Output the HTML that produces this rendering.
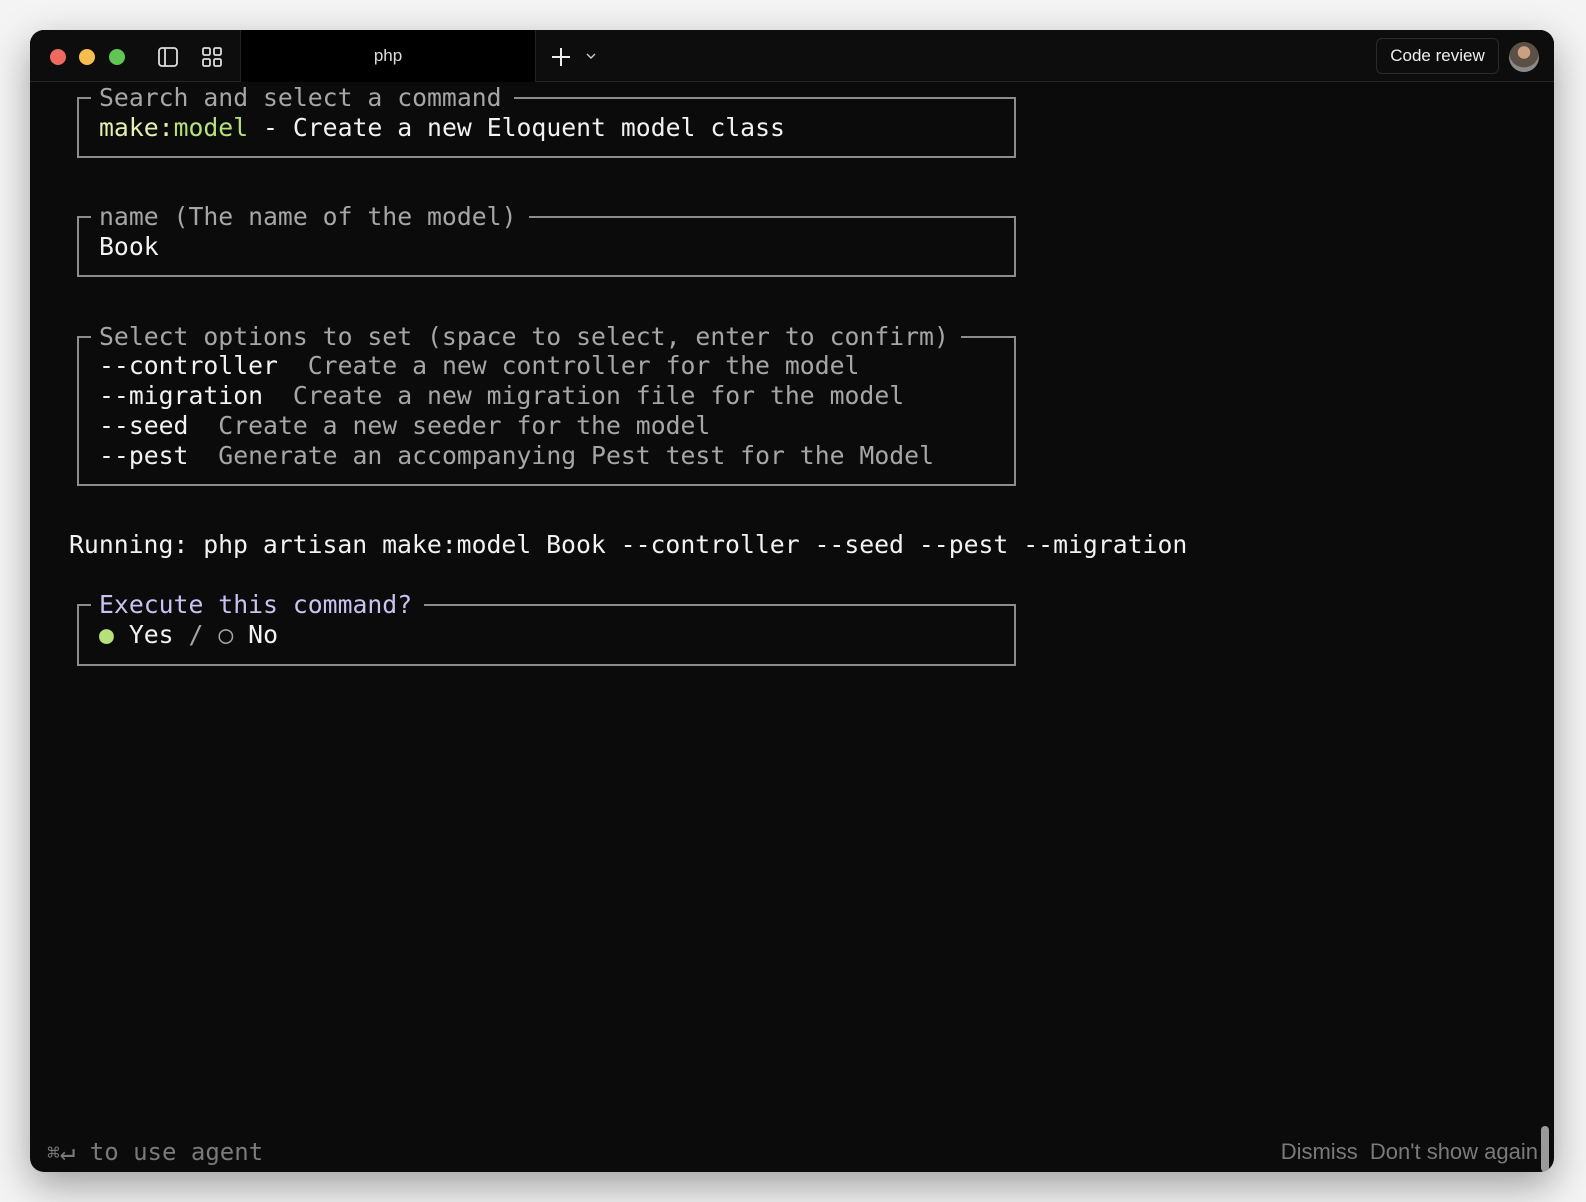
<!DOCTYPE html>
<html><head><meta charset="utf-8"><style>
*{margin:0;padding:0;box-sizing:border-box}
body{width:1586px;height:1202px;background:#f4f4f4;position:relative;overflow:hidden;font-family:"DejaVu Sans Mono","Liberation Mono",monospace}
.win{position:absolute;left:30px;top:30px;width:1524px;height:1142px;background:#0b0b0b;border-radius:14px;box-shadow:0 14px 40px rgba(0,0,0,.35);overflow:hidden}
.tb{position:absolute;left:0;top:0;width:100%;height:52px;border-bottom:1px solid #262626;background:#0d0d0d}
.dot{position:absolute;top:19px;width:16px;height:16px;border-radius:50%}
.tab{position:absolute;left:210px;top:0;width:296px;height:52px;background:#000;border-left:1px solid #222;border-right:1px solid #222;color:#ddd;font:17px "Liberation Sans",sans-serif;text-align:center;line-height:52px}
.t{position:absolute;font-size:24.78px;line-height:30px;white-space:pre;color:#f2f2f2}
.g{color:#a6a6a6}
.box{position:absolute;left:47px;width:939px;border:2px solid #8c8c8c}
.lab{position:absolute;top:-16px;left:12px;background:#0b0b0b;padding:0 12px 0 8px;font-size:24.78px;line-height:30px;white-space:pre;color:#a6a6a6}
</style></head><body>
<div class="win">
 <div class="tb">
  <div class="dot" style="left:20px;background:#ed6a5e"></div>
  <div class="dot" style="left:49px;background:#f5bf4f"></div>
  <div class="dot" style="left:79px;background:#61c554"></div>
  <svg style="position:absolute;left:127px;top:16px" width="22" height="22" viewBox="0 0 22 22" fill="none" stroke="#ddd" stroke-width="1.8"><rect x="2" y="2" width="18" height="18" rx="3"/><line x1="8" y1="2" x2="8" y2="20"/></svg>
  <svg style="position:absolute;left:171px;top:16px" width="22" height="22" viewBox="0 0 22 22" fill="none" stroke="#ddd" stroke-width="1.8"><rect x="2" y="2" width="7" height="7" rx="1.5"/><rect x="13" y="2" width="7" height="7" rx="1.5"/><rect x="2" y="13" width="7" height="7" rx="1.5"/><rect x="13" y="13" width="7" height="7" rx="1.5"/></svg>
  <div class="tab">php</div>
  <svg style="position:absolute;left:520px;top:16px" width="22" height="22" viewBox="0 0 22 22" stroke="#eee" stroke-width="2"><line x1="11" y1="2" x2="11" y2="20"/><line x1="2" y1="11" x2="20" y2="11"/></svg>
  <svg style="position:absolute;left:556px;top:22px" width="10" height="8" viewBox="0 0 10 8" fill="none" stroke="#ccc" stroke-width="1.4"><polyline points="1,2 5,6 9,2"/></svg>
  <div style="position:absolute;left:1346px;top:8px;width:123px;height:36px;border:1px solid #2a2a2a;border-radius:6px;color:#eee;font:17px 'Liberation Sans',sans-serif;line-height:34px;text-align:center">Code review</div>
  <div style="position:absolute;left:1479px;top:12px;width:30px;height:30px;border-radius:50%;background:radial-gradient(circle at 50% 35%,#c9a080 0 25%,#5a5046 26% 60%,#8a8a88 61%)"></div>
 </div>

 <div class="box" style="top:67px;height:61px"><div class="lab">Search and select a command</div></div>
 <div class="t" style="left:69px;top:83px"><span style="color:#e4efb0">make:</span><span style="color:#b5e07a">model</span> - Create a new Eloquent model class</div>

 <div class="box" style="top:186px;height:61px"><div class="lab">name (The name of the model)</div></div>
 <div class="t" style="left:69px;top:202px">Book</div>

 <div class="box" style="top:306px;height:150px"><div class="lab">Select options to set (space to select, enter to confirm)</div></div>
 <div class="t" style="left:69px;top:321px">--controller  <span class="g">Create a new controller for the model</span>
--migration  <span class="g">Create a new migration file for the model</span>
--seed  <span class="g">Create a new seeder for the model</span>
--pest  <span class="g">Generate an accompanying Pest test for the Model</span></div>

 <div class="t" style="left:39px;top:500px">Running: php artisan make:model Book --controller --seed --pest --migration</div>

 <div class="box" style="top:574px;height:62px"><div class="lab" style="color:#c9c2f2">Execute this command?</div></div>
 <div class="t" style="left:69px;top:590px"><span style="color:#b5e07a">●</span> Yes <span class="g">/</span> <span class="g">○</span> No</div>

 <div class="t" style="left:17px;top:1107px;font-size:24px;color:#7a7a7a"><span style="font-size:21px">⌘</span><span style="font-size:26px">↵</span> to use agent</div>
 <div style="position:absolute;right:16px;top:1107px;font:22px 'Liberation Sans',sans-serif;line-height:30px;color:#7a7a7a">Dismiss&nbsp; Don't show again</div>
 <div style="position:absolute;left:1511px;top:1096px;width:8px;height:46px;border-radius:4px;background:#9a9a9a"></div>
</div>
</body></html>
